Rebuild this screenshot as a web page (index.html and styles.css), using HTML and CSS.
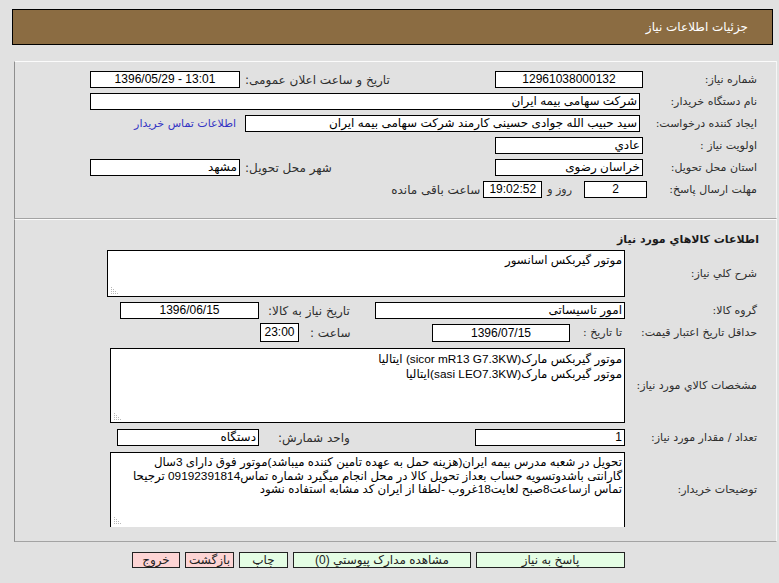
FILE: index.html
```html
<!DOCTYPE html>
<html lang="fa" dir="rtl">
<head>
<meta charset="utf-8">
<title>جزئیات اطلاعات نیاز</title>
<link rel="stylesheet" href="styles.css">
</head>
<body>
<div class="header">جزئیات اطلاعات نیاز</div>

<div class="panel p1">
  <div class="row">
    <div class="lbl w133">شماره نیاز:</div>
    <div class="box c w148">12961038000132</div>
    <div class="lbl2 w255">تاریخ و ساعت اعلان عمومی:</div>
    <div class="box c w150" dir="ltr">1396/05/29 - 13:01</div>
  </div>
  <div class="row">
    <div class="lbl w136">نام دستگاه خریدار:</div>
    <div class="box w550">شرکت سهامی بیمه ایران</div>
  </div>
  <div class="row">
    <div class="lbl w136">ایجاد کننده درخواست:</div>
    <div class="box w395">سید حبیب الله جوادی حسینی کارمند شرکت سهامی بیمه ایران</div>
    <a class="link" href="#">اطلاعات تماس خریدار</a>
  </div>
  <div class="row">
    <div class="lbl w133">اولویت نیاز :</div>
    <div class="box w148">عادي</div>
  </div>
  <div class="row">
    <div class="lbl w133">استان محل تحویل:</div>
    <div class="box w148">خراسان رضوی</div>
    <div class="lbl2 w255">شهر محل تحویل:</div>
    <div class="box w150">مشهد</div>
  </div>
  <div class="row">
    <div class="lbl w129">مهلت ارسال پاسخ:</div>
    <div class="box c w63">2</div>
    <span class="days">روز و</span>
    <div class="box c w59 time">19:02:52</div>
    <span class="remain">ساعت باقی مانده</span>
  </div>
</div>

<div class="panel p2">
  <div class="title">اطلاعات کالاهاي مورد نیاز</div>

  <div class="row2 ra">
    <div class="lbl2r">شرح کلي نیاز:</div>
    <div class="area w518 h47">
      <div class="line">موتور گیربکس اسانسور</div>
      <svg class="grip" width="7" height="7" viewBox="0 0 7 7"><g fill="#b8b8b8"><rect x="0" y="0" width="1" height="1"/><rect x="0" y="2" width="1" height="1"/><rect x="2" y="2" width="1" height="1"/><rect x="0" y="4" width="1" height="1"/><rect x="2" y="4" width="1" height="1"/><rect x="4" y="4" width="1" height="1"/><rect x="0" y="6" width="1" height="1"/><rect x="2" y="6" width="1" height="1"/><rect x="4" y="6" width="1" height="1"/><rect x="6" y="6" width="1" height="1"/></g></svg>
    </div>
  </div>

  <div class="row2 rb">
    <div class="lbl2r">گروه کالا:</div>
    <div class="box w250">امور تاسیساتی</div>
    <div class="sublbl w116">تاریخ نیاز به کالا:</div>
    <div class="box c w139">1396/06/15</div>
  </div>

  <div class="row2 rc">
    <div class="lbl2r">حداقل تاریخ اعتبار قیمت:</div>
    <div class="totag">تا تاریخ :</div>
    <div class="box c w138 h18">1396/07/15</div>
    <div class="sublbl w133b">ساعت :</div>
    <div class="box c w39 h19">23:00</div>
  </div>

  <div class="row2 rd">
    <div class="lbl2r">مشخصات کالاي مورد نیاز:</div>
    <div class="area w515 h75">
      <div class="line l15">موتور گیربکس مارک(sicor mR13 G7.3KW) ایتالیا</div>
      <div class="line l15">موتور گیربکس مارک(sasi LEO7.3KW)ایتالیا</div>
      <svg class="grip" width="7" height="7" viewBox="0 0 7 7"><g fill="#b8b8b8"><rect x="0" y="0" width="1" height="1"/><rect x="0" y="2" width="1" height="1"/><rect x="2" y="2" width="1" height="1"/><rect x="0" y="4" width="1" height="1"/><rect x="2" y="4" width="1" height="1"/><rect x="4" y="4" width="1" height="1"/><rect x="0" y="6" width="1" height="1"/><rect x="2" y="6" width="1" height="1"/><rect x="4" y="6" width="1" height="1"/><rect x="6" y="6" width="1" height="1"/></g></svg>
    </div>
  </div>

  <div class="row2 re">
    <div class="lbl2r">تعداد / مقدار مورد نیاز:</div>
    <div class="box w150">1</div>
    <div class="sublbl w216">واحد شمارش:</div>
    <div class="box w142">دستگاه</div>
  </div>

  <div class="row2 rf">
    <div class="lbl2r">توضیحات خریدار:</div>
    <div class="clip">
      <div class="area w515 h90">
        <div class="line">تحویل در شعبه مدرس بیمه ایران(هزینه حمل به عهده تامین کننده میباشد)موتور فوق دارای 3سال</div>
        <div class="line">گارانتی باشدوتسویه حساب بعداز تحویل کالا در محل انجام میگیرد شماره تماس09192391814 ترجیحا</div>
        <div class="line">تماس ازساعت8صبح لغایت18غروب -لطفا از ایران کد مشابه استفاده نشود</div>
        <svg class="grip g2" width="7" height="7" viewBox="0 0 7 7"><g fill="#b8b8b8"><rect x="0" y="0" width="1" height="1"/><rect x="0" y="2" width="1" height="1"/><rect x="2" y="2" width="1" height="1"/><rect x="0" y="4" width="1" height="1"/><rect x="2" y="4" width="1" height="1"/><rect x="4" y="4" width="1" height="1"/><rect x="0" y="6" width="1" height="1"/><rect x="2" y="6" width="1" height="1"/><rect x="4" y="6" width="1" height="1"/><rect x="6" y="6" width="1" height="1"/></g></svg>
      </div>
    </div>
  </div>
</div>

<div class="buttons">
  <button class="btn green b149">پاسخ به نیاز</button>
  <button class="btn green b178">مشاهده مدارک پیوستي (0)</button>
  <button class="btn green b49">چاپ</button>
  <button class="btn pink b49">بازگشت</button>
  <button class="btn pink b48">خروج</button>
</div>
</body>
</html>
```

FILE: styles.css
```css
html, body {
  margin: 0;
  padding: 0;
  background: #e1e1e1;
  font-family: "DejaVu Sans", sans-serif;
  font-size: 11px;
  color: #2e2e2e;
}

.header {
  box-sizing: border-box;
  margin: 9px 6px 0 12px;
  height: 36px;
  border: 1px solid #000;
  background: #8b6c42;
  color: #fff;
  display: flex;
  align-items: center;
  padding-right: 24px;
  font-size: 12px;
}

.panel {
  margin: 0 2px 0 14px;
  border-top: 1px solid #fbfbfb;
  border-left: 1px solid #8e8e8e;
  border-bottom: 1px solid #a3a3a3;
  border-right: 1px solid #f6f6f6;
}

.p1 {
  margin-top: 16px;
  padding: 9px 0 20px 0;
  display: flex;
  flex-direction: column;
  gap: 5px;
}

.row {
  display: flex;
  align-items: center;
  height: 17px;
}

.lbl {
  flex: none;
  box-sizing: border-box;
  padding-right: 19px;
  white-space: nowrap;
}
.w133 { width: 133px; }
.w136 { width: 136px; }
.w129 { width: 129px; }

.lbl2 {
  flex: none;
  box-sizing: border-box;
  text-align: left;
  padding-left: 5px;
  white-space: nowrap;
  font-size: 12px;
}
.w255 { width: 255px; }

.box {
  flex: none;
  box-sizing: border-box;
  height: 17px;
  border: 1px solid #000;
  background: #fff;
  color: #000;
  padding: 0 2px;
  font-family: "Liberation Sans", "DejaVu Sans", sans-serif;
  font-size: 12px;
  line-height: 15px;
  white-space: nowrap;
  overflow: hidden;
}
.box.c { text-align: center; }
.h18 { height: 18px; line-height: 16px; }
.h19 { height: 19px; line-height: 17px; }

.w148 { width: 148px; }
.w150 { width: 150px; }
.w550 { width: 550px; }
.w395 { width: 395px; }
.w63 { width: 63px; }
.w59 { width: 59px; }
.w250 { width: 250px; }
.w139 { width: 139px; }
.w138 { width: 138px; }
.w39 { width: 39px; }
.w142 { width: 142px; }

.link {
  margin-right: 9px;
  color: #3434c4;
  text-decoration: none;
  white-space: nowrap;
}

.days {
  margin-right: 12px;
  white-space: nowrap;
}
.time { margin-right: 5px; }
.remain {
  margin-right: 3px;
  white-space: nowrap;
  font-size: 12px;
}

/* section 2 */
.p2 {
  padding: 0 0 14px 0;
}

.title {
  margin-top: 12px;
  height: 16px;
  line-height: 16px;
  padding-right: 17px;
  font-weight: bold;
  color: #1a1a1a;
}

.row2 {
  display: flex;
  align-items: center;
}
.ra { margin-top: 2px; }
.rb { margin-top: 5px; }
.rc { margin-top: 4px; }
.rd { margin-top: 6px; }
.re { margin-top: 6px; }
.rf { margin-top: 6px; }

.lbl2r {
  flex: none;
  box-sizing: border-box;
  width: 151px;
  padding-right: 19px;
  white-space: nowrap;
}

.sublbl {
  flex: none;
  box-sizing: border-box;
  text-align: left;
  white-space: nowrap;
  font-size: 12px;
}
.w116 { width: 116px; padding-left: 9px; }
.w133b { width: 133px; padding-left: 11px; }
.w216 { width: 216px; padding-left: 19px; }

.totag {
  flex: none;
  box-sizing: border-box;
  width: 55px;
  padding-right: 3px;
  white-space: nowrap;
}

.area {
  position: relative;
  flex: none;
  box-sizing: border-box;
  border: 1px solid #000;
  background: #fff;
  color: #000;
  padding: 3px 2px 0 2px;
  overflow: hidden;
  font-family: "Liberation Sans", "DejaVu Sans", sans-serif;
  font-size: 11.8px;
}
.w518 { width: 518px; }
.w515 { width: 515px; }
.h47 { height: 47px; }
.h75 { height: 75px; }
.h90 { height: 90px; }

.line {
  white-space: nowrap;
  line-height: 13.5px;
}
.line.l15 { line-height: 15px; }

.grip {
  position: absolute;
  left: 3px;
  bottom: 2px;
}
.grip.g2 { bottom: 17px; }

.clip {
  flex: none;
  height: 75px;
  overflow: hidden;
}

.buttons {
  display: flex;
  gap: 5px;
  margin-top: 10px;
  padding-right: 154px;
}

.btn {
  box-sizing: border-box;
  height: 16px;
  border: 1px solid #222;
  padding: 0;
  margin: 0;
  font-family: "Liberation Sans", "DejaVu Sans", sans-serif;
  font-size: 12px;
  color: #222;
  line-height: 14px;
  text-align: center;
}
.green { background: #e4fde4; }
.pink { background: #fdd4d4; }
.b149 { width: 149px; }
.b178 { width: 178px; }
.b49 { width: 49px; }
.b48 { width: 48px; }
```
